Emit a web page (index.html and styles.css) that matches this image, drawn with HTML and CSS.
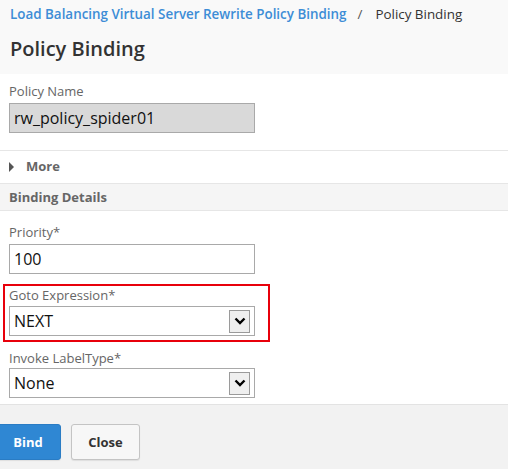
FILE: index.html
```html
<!DOCTYPE html>
<html>
<head>
<meta charset="utf-8">
<link rel="stylesheet" href="styles.css">
</head>
<body>
<div class="header">
  <div class="crumbs"><span class="crumb-link">Load Balancing Virtual Server Rewrite Policy Binding</span><span class="sep">/</span><span class="crumb-cur">Policy Binding</span></div>
  <h1 class="title">Policy Binding</h1>
</div>
<div class="content">
  <div class="sec-top">
    <div class="label">Policy Name</div>
    <div class="input disabled">rw_policy_spider01</div>
  </div>
  <div class="more"><span class="tri"></span><span class="more-text">More</span></div>
  <div class="sec-head">Binding Details</div>
  <div class="sec-body">
    <div class="label">Priority*</div>
    <div class="input">100</div>
    <div class="highlight">
      <div class="label">Goto Expression*</div>
      <div class="input select"><span>NEXT</span><span class="arrow"><svg width="12" height="8" viewBox="0 0 12 8"><polyline points="1.5,1.5 6,6 10.5,1.5" fill="none" stroke="#000" stroke-width="2.4"/></svg></span></div>
    </div>
    <div class="label invoke">Invoke LabelType*</div>
    <div class="input select"><span>None</span><span class="arrow"><svg width="12" height="8" viewBox="0 0 12 8"><polyline points="1.5,1.5 6,6 10.5,1.5" fill="none" stroke="#000" stroke-width="2.4"/></svg></span></div>
  </div>
</div>
<div class="footer">
  <button class="btn primary">Bind</button>
  <button class="btn">Close</button>
</div>
</body>
</html>
```

FILE: styles.css
```css
html, body {
  margin: 0;
  padding: 0;
}
body {
  background: #f9f9f9;
  font-family: "Open Sans", "Liberation Sans", sans-serif;
  color: #333;
  width: 508px;
  height: 469px;
  overflow: hidden;
}
.header {
  padding: 5px 10px 0;
  height: 69px;
}
.crumbs {
  font-size: 13.4px;
  line-height: 18px;
  white-space: nowrap;
}
.crumb-link {
  color: #3d8dd6;
  font-weight: 600;
}
.sep {
  color: #555;
  margin: 0 13px 0 11px;
}
.crumb-cur {
  color: #333;
}
.title {
  margin: 12px 0 0;
  font-size: 20px;
  font-weight: 600;
  line-height: 28px;
  color: #333;
}
.content {
  background: #fff;
}
.sec-top {
  padding: 8px 0 17px 9px;
  border-bottom: 1px solid #e6e6e6;
}
.label {
  font-size: 13px;
  line-height: 18px;
  color: #666;
  margin-bottom: 3px;
}
.input {
  box-sizing: border-box;
  width: 246px;
  height: 30px;
  border: 1px solid #a9a9a9;
  background: #fff;
  font-size: 16px;
  line-height: 28px;
  padding-left: 4px;
  color: #111;
}
.input.disabled {
  background: #d9d9d9;
}
.more {
  height: 32px;
  display: flex;
  align-items: center;
  padding-left: 9px;
  border-bottom: 1px solid #e6e6e6;
}
.tri {
  width: 0;
  height: 0;
  border-left: 5px solid #555;
  border-top: 5px solid transparent;
  border-bottom: 5px solid transparent;
  margin-right: 12px;
  margin-top: -1px;
}
.more-text {
  font-size: 13px;
  font-weight: 700;
  color: #666;
  margin-top: -2px;
}
.sec-head {
  height: 26px;
  line-height: 26px;
  background: #f5f5f5;
  border-bottom: 1px solid #e6e6e6;
  padding-left: 9px;
  font-size: 13px;
  font-weight: 700;
  color: #666;
}
.sec-body {
  padding: 12px 0 6px 9px;
}
.highlight {
  margin: 10px 0 0 -6px;
  width: 267px;
  box-sizing: border-box;
  border: 2px solid #e8000b;
  padding: 0 0 4px 4px;
}
.highlight .label {
  margin-bottom: 2px;
}
.select {
  display: flex;
  align-items: center;
  justify-content: space-between;
  padding-right: 4px;
}
.arrow {
  box-sizing: border-box;
  width: 21px;
  height: 23px;
  border: 1px solid #9a9a9a;
  background: #efefef;
  display: flex;
  align-items: center;
  justify-content: center;
}
.arrow svg {
  display: block;
}
.label.invoke {
  margin-top: 7px;
  margin-bottom: 1px;
}
.footer {
  border-top: 1px solid #e3e3e3;
  background: #f2f2f2;
  height: 80px;
  padding-top: 19px;
  box-sizing: border-box;
  display: flex;
  align-items: flex-start;
  gap: 10px;
}
.btn {
  height: 36px;
  width: 69px;
  border: 1px solid #c4c4c4;
  border-radius: 3px;
  background: #f7f7f7;
  font-family: "Open Sans", "Liberation Sans", sans-serif;
  font-size: 13px;
  font-weight: 700;
  color: #333;
  padding: 0;
  box-shadow: 0 1px 1px rgba(0,0,0,0.08);
}
.btn.primary {
  width: 66px;
  margin-left: -5px;
  background: #2f87d3;
  border-color: #2a7cc4;
  color: #fff;
}
```
